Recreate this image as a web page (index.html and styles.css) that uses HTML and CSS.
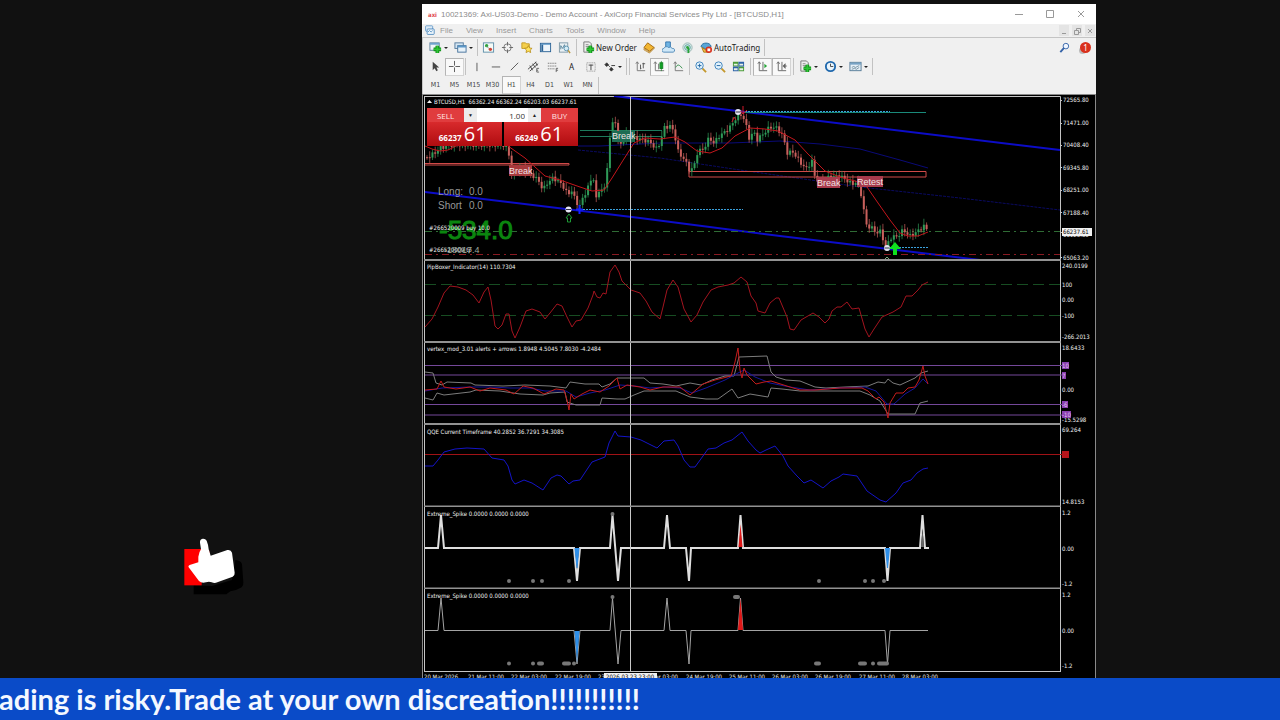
FILE: index.html
```html
<!DOCTYPE html>
<html lang="en">
<head>
    <meta charset="UTF-8">
    <meta name="viewport" content="width=device-width, initial-scale=1.0">
    <title>BTCUSD,H1</title>
    <link rel="stylesheet" href="styles.css">
</head>
<body>
    <svg class="sprite" aria-hidden="true">
        <symbol id="i-mdi" viewBox="0 0 14 14"><rect x="2" y="1" width="9" height="7" rx="1" fill="#dcebf7" stroke="#5b93c4"/><rect x="4" y="5" width="9" height="7" rx="1" fill="#eaf4fb" stroke="#3f7fb8"/><path d="M5 9l2-2 2 2 2-2" stroke="#4a87bd" fill="none"/></symbol>
        <symbol id="i-newchart" viewBox="0 0 14 14"><rect x="1" y="2" width="10" height="8" fill="#eef5fa" stroke="#5d7f9a"/><path d="M1 3h10" stroke="#6ea3cc" stroke-width="2"/><path d="M9 5v8M5 9h8" stroke="#0d8a14" stroke-width="4"/><path d="M9 5v8M5 9h8" stroke="#2fc437" stroke-width="2"/></symbol>
        <symbol id="i-profiles" viewBox="0 0 14 14"><rect x="1" y="2" width="9" height="6" fill="#d4e6f3" stroke="#54799b"/><rect x="4" y="5" width="9" height="7" fill="#e8f2f9" stroke="#45729b"/><path d="M4 6h9" stroke="#5a97c8" stroke-width="2"/></symbol>
        <symbol id="i-market" viewBox="0 0 14 14"><rect x="1.500" y="2" width="11" height="10" fill="#f5fbf7" stroke="#5f8faa"/><circle cx="5" cy="5" r="1.800" fill="#2da33c"/><path d="M5 6l4 3" stroke="#999"/><circle cx="9" cy="9" r="1.800" fill="#cf4436"/></symbol>
        <symbol id="i-target" viewBox="0 0 14 14"><circle cx="7" cy="7" r="4" fill="none" stroke="#777"/><path d="M7 1v4M7 9v4M1 7h4M9 7h4" stroke="#666"/></symbol>
        <symbol id="i-stars" viewBox="0 0 14 14"><path d="M2 2h4l1 1h3v5H2z" fill="#f4cf4b" stroke="#c39a2a"/><path d="M9 5l1.300 2.500 2.700.4-2 1.900.5 2.700L9 11.200 6.500 12.500 7 9.800 5 7.900l2.700-.4z" fill="#ffe25a" stroke="#b28510" stroke-width=".8"/></symbol>
        <symbol id="i-terminal" viewBox="0 0 14 14"><rect x="1.500" y="2.500" width="11" height="9" fill="#eef5fb" stroke="#2c6396"/><path d="M2 3.500h10" stroke="#4a8cc4"/><path d="M3.500 4v7" stroke="#2c6396" stroke-width="2"/></symbol>
        <symbol id="i-tester" viewBox="0 0 14 14"><rect x="1.500" y="2" width="9" height="10" fill="#eaf1f4" stroke="#7f9aa8"/><path d="M3 9V5l2 3 2-4 1 4" stroke="#57859d" fill="none"/><circle cx="9" cy="8" r="2.500" fill="#d5ecf6" stroke="#5b93b0"/><path d="M11 10l2 3" stroke="#b59033" stroke-width="1.500"/></symbol>
        <symbol id="i-order" viewBox="0 0 14 14"><path d="M2 1h6l2 2v9H2z" fill="#eee" stroke="#777"/><path d="M4 4h3M4 6h4" stroke="#888"/><path d="M9 5v8M5 9h8" stroke="#0d8a14" stroke-width="4"/><path d="M9 5v8M5 9h8" stroke="#2fc437" stroke-width="2"/></symbol>
        <symbol id="i-book" viewBox="0 0 14 14"><path d="M5 2l7 5-5 4-6-4z" fill="#f2b632" stroke="#a66b0e"/><path d="M1 8v1.500L7 13l5-5V7L7 12z" fill="#ffe9a8" stroke="#a66b0e" stroke-width=".7"/></symbol>
        <symbol id="i-vps" viewBox="0 0 14 14"><path d="M4 1h5v6H4z" fill="#6fb4e3" stroke="#3475ad"/><path d="M2 12a2 2 0 0 1 0-4 3 3 0 0 1 5-1 3 3 0 0 1 4 1 2 2 0 0 1 1 4z" fill="#cfe8f8" stroke="#5089b8"/></symbol>
        <symbol id="i-signal" viewBox="0 0 14 14"><circle cx="7" cy="7" r="5" fill="#d5e9e6" stroke="#9ab5b3"/><circle cx="7" cy="7" r="3" fill="none" stroke="#59a0a0"/><path d="M8 7v6" stroke="#27a237" stroke-width="2"/><circle cx="7" cy="7" r="1.500" fill="#2da33c"/></symbol>
        <symbol id="i-auto" viewBox="0 0 14 14"><path d="M1 6c1-5 10-5 11 0L7 9z" fill="#58a6d8" stroke="#2c6f9f"/><path d="M2 7l5 3 4-3-1 5H4z" fill="#f0c04a" stroke="#a87a17"/><circle cx="9.500" cy="9.500" r="3.500" fill="#d8311d"/><rect x="8" y="8" width="3" height="3" fill="#fff"/></symbol>
        <symbol id="i-cursor" viewBox="0 0 14 14"><path d="M4 2v9l2-2 2 3 1.500-1L8 8h3z" fill="#444"/></symbol>
        <symbol id="i-cross" viewBox="0 0 14 14"><path d="M7 1v5M7 8v5M1 7h5M8 7h5" stroke="#555"/></symbol>
        <symbol id="i-vline" viewBox="0 0 14 14"><path d="M7.500 3v9" stroke="#555"/></symbol>
        <symbol id="i-hline" viewBox="0 0 14 14"><path d="M3 7.500h9" stroke="#555"/></symbol>
        <symbol id="i-trend" viewBox="0 0 14 14"><path d="M3 11l8-8" stroke="#555"/></symbol>
        <symbol id="i-channel" viewBox="0 0 14 14"><path d="M1 10l9-8M3 12l9-8M3 6l3 5M6 4l3 4M9 2l2 4" stroke="#444"/><path d="M13 9h-2.500v4H13M10.500 11H12" stroke="#444" fill="none" stroke-width=".8"/></symbol>
        <symbol id="i-fibo" viewBox="0 0 14 14"><path d="M2 3.500h10M2 6.500h10M2 9.500h7" stroke="#555" stroke-dasharray="1 1"/><path d="M13 9h-2v4M11 11h2" stroke="#444" fill="none" stroke-width=".8"/></symbol>
        <symbol id="i-label" viewBox="0 0 14 14"><rect x="3" y="3" width="9" height="9" fill="none" stroke="#888" stroke-dasharray="1 1"/><path d="M5 5.500h5M7.500 5v6" stroke="#444"/></symbol>
        <symbol id="i-arrows" viewBox="0 0 14 14"><path d="M2 5l2-2 2 2-2 2zM5 5l3 3M7 10l2-2 2 2-2 2z" fill="#333" stroke="#333" stroke-width=".8"/><path d="M9 6h4" stroke="#333"/></symbol>
        <symbol id="i-bars" viewBox="0 0 14 14"><path d="M3.500 2v9.500H12M2 4l1.500-2L5 4" stroke="#777" fill="none"/><path d="M7 5v5M7 9h1M10 3v6M9 4h3" stroke="#555"/></symbol>
        <symbol id="i-candles" viewBox="0 0 14 14"><path d="M2.500 2v9.500H12M1 4l1.500-2L4 4M6 4v6" stroke="#777" fill="none"/><rect x="7.500" y="3" width="3" height="6" fill="#1fc436" stroke="#0c7d1b"/><path d="M9 1v11" stroke="#0c7d1b" stroke-width=".7"/></symbol>
        <symbol id="i-line" viewBox="0 0 14 14"><path d="M3.500 2v9.500H12M2 4l1.500-2L5 4" stroke="#777" fill="none"/><path d="M4 8c2-4 4-3 7 1" stroke="#2b8b43" fill="none"/></symbol>
        <symbol id="i-zoomin" viewBox="0 0 14 14"><path d="M9 9l4 4" stroke="#c4982c" stroke-width="2"/><circle cx="6" cy="6" r="4" fill="#e0f1fc" stroke="#3a80ba"/><path d="M4 6h4M6 4v4" stroke="#2468a4"/></symbol>
        <symbol id="i-zoomout" viewBox="0 0 14 14"><path d="M9 9l4 4" stroke="#c4982c" stroke-width="2"/><circle cx="6" cy="6" r="4" fill="#e0f1fc" stroke="#3a80ba"/><path d="M4 6h4" stroke="#2468a4"/></symbol>
        <symbol id="i-tile" viewBox="0 0 14 14"><path d="M1 2h6v5H1zM7 7h6v5H7z" fill="#4b9b38"/><path d="M7 2h6v5H7zM1 7h6v5H1z" fill="#2d62a8"/><path d="M2 5h4M8 5h4M2 10h4M8 10h4" stroke="#e8f2e6" stroke-width="2"/></symbol>
        <symbol id="i-scroll" viewBox="0 0 14 14"><path d="M3.500 2v9.500H12M2 4l1.500-2L5 4M7.500 2v9" stroke="#666" fill="none"/><path d="M9 4l3 2.500L9 9z" fill="#24a637"/></symbol>
        <symbol id="i-shift" viewBox="0 0 14 14"><path d="M3.500 2v9.500H12M2 4l1.500-2L5 4M7.500 2v9" stroke="#666" fill="none"/><path d="M11 4L8.500 6.500 11 9zM10 6.500h3" fill="#666" stroke="#666" stroke-width=".8"/></symbol>
        <symbol id="i-clock" viewBox="0 0 14 14"><circle cx="7" cy="7" r="5" fill="#eaf4fb" stroke="#1f68ad" stroke-width="2"/><path d="M7 4v3h3" stroke="#444" fill="none"/></symbol>
        <symbol id="i-template" viewBox="0 0 14 14"><rect x="1" y="2.500" width="12" height="9" fill="#e5eff6" stroke="#567b98"/><path d="M1 4h12" stroke="#78a3c4" stroke-width="2"/><path d="M3 8l2-1 2 1 4-2M3 10l3-1 2 1 3-2" stroke="#5b7b8c" fill="none" stroke-width=".8"/></symbol>
        <symbol id="i-search" viewBox="0 0 14 14"><circle cx="8.500" cy="5.500" r="3" fill="#eef5ff" stroke="#3563a8"/><path d="M6.500 7.500L2.500 12" stroke="#3563a8" stroke-width="2"/></symbol>
    </svg>

    <main class="stage">
        <aside class="side">
            <svg class="thumb" viewBox="546 12 192 192" role="img" aria-label="Like">
                <path d="M584 166v27h98l12-9q20-3 34-12 6-4 5-15l-4-54q-3-12-20-13l-10 60-60 18z" fill="#000"/>
                <rect x="556" y="57" width="52" height="109" fill="#f00"/>
                <path d="M608 60h22l3 18h-25z" fill="#f00"/>
                <path d="M603 38q-1-10 8-12 8-1 12 6 5 12 6 26l6 19 50-17q11-2 14 8l8 60q1 8-6 12l-46 17q-8 4-17 0-8-4-17 0-13 4-21-4l-31-41q-3-5 3-7l26-8V80q2-14 8-22z" fill="#fff"/>
            </svg>
        </aside>

        <section class="terminal">
            <header class="titlebar">
                <span class="brand">axi</span>
                <span class="window-title">10021369: Axi-US03-Demo - Demo Account - AxiCorp Financial Services Pty Ltd - [BTCUSD,H1]</span>
                <div class="window-buttons">
                    <button type="button" aria-label="Minimize"><svg viewBox="0 0 10 10"><path d="M1 5.500h8"/></svg></button>
                    <button type="button" aria-label="Maximize"><svg viewBox="0 0 10 10"><path d="M1.500 1.500h7v7h-7z"/></svg></button>
                    <button type="button" aria-label="Close"><svg viewBox="0 0 10 10"><path d="M2 2l6 6M8 2l-6 6"/></svg></button>
                </div>
            </header>

            <nav class="menubar">
                <svg class="mdi"><use href="#i-mdi"/></svg>
                <button type="button">File</button>
                <button type="button">View</button>
                <button type="button">Insert</button>
                <button type="button">Charts</button>
                <button type="button">Tools</button>
                <button type="button">Window</button>
                <button type="button">Help</button>
                <div class="mdi-buttons">
                    <button type="button" aria-label="Minimize chart"><svg viewBox="0 0 10 10"><path d="M3 7.500h4"/></svg></button>
                    <button type="button" aria-label="Restore chart"><svg viewBox="0 0 10 10"><path d="M2.500 4.500h4v4h-4zM4.500 4V2.500h4v4H7"/></svg></button>
                    <button type="button" aria-label="Close chart"><svg viewBox="0 0 10 10"><path d="M3 3l4 4M7 3L3 7"/></svg></button>
                </div>
            </nav>

            <div class="toolbar">
                <button type="button" class="tool drop" aria-label="New chart"><svg><use href="#i-newchart"/></svg></button>
                <button type="button" class="tool drop" aria-label="Profiles"><svg><use href="#i-profiles"/></svg></button>
                <i class="sep tight"></i>
                <button type="button" class="tool" aria-label="Market watch"><svg><use href="#i-market"/></svg></button>
                <button type="button" class="tool" aria-label="Data window"><svg><use href="#i-target"/></svg></button>
                <button type="button" class="tool" aria-label="Navigator"><svg><use href="#i-stars"/></svg></button>
                <button type="button" class="tool" aria-label="Terminal"><svg><use href="#i-terminal"/></svg></button>
                <button type="button" class="tool" aria-label="Strategy tester"><svg><use href="#i-tester"/></svg></button>
                <i class="sep"></i>
                <button type="button" class="tool wide"><svg><use href="#i-order"/></svg>New Order</button>
                <button type="button" class="tool" aria-label="MetaEditor"><svg><use href="#i-book"/></svg></button>
                <button type="button" class="tool" aria-label="Hosting"><svg><use href="#i-vps"/></svg></button>
                <button type="button" class="tool" aria-label="Signals"><svg><use href="#i-signal"/></svg></button>
                <button type="button" class="tool wide"><svg><use href="#i-auto"/></svg>AutoTrading</button>
                <i class="sep tight"></i>
                <div class="toolbar-end">
                    <button type="button" class="tool" aria-label="Search"><svg><use href="#i-search"/></svg></button>
                    <button type="button" class="tool alert" aria-label="Notifications"><span class="badge">1</span></button>
                </div>
            </div>

            <div class="toolbar">
                <button type="button" class="tool" aria-label="Cursor"><svg><use href="#i-cursor"/></svg></button>
                <button type="button" class="tool pressed" aria-label="Crosshair"><svg><use href="#i-cross"/></svg></button>
                <i class="sep tight"></i>
                <button type="button" class="tool" aria-label="Vertical line"><svg><use href="#i-vline"/></svg></button>
                <button type="button" class="tool" aria-label="Horizontal line"><svg><use href="#i-hline"/></svg></button>
                <button type="button" class="tool" aria-label="Trendline"><svg><use href="#i-trend"/></svg></button>
                <button type="button" class="tool" aria-label="Channel"><svg><use href="#i-channel"/></svg></button>
                <button type="button" class="tool" aria-label="Fibonacci"><svg><use href="#i-fibo"/></svg></button>
                <button type="button" class="tool">A</button>
                <button type="button" class="tool" aria-label="Text label"><svg><use href="#i-label"/></svg></button>
                <button type="button" class="tool drop" aria-label="Arrows"><svg><use href="#i-arrows"/></svg></button>
                <i class="sep double"></i>
                <button type="button" class="tool" aria-label="Bar chart"><svg><use href="#i-bars"/></svg></button>
                <button type="button" class="tool pressed" aria-label="Candlesticks"><svg><use href="#i-candles"/></svg></button>
                <button type="button" class="tool" aria-label="Line chart"><svg><use href="#i-line"/></svg></button>
                <i class="sep tight"></i>
                <button type="button" class="tool" aria-label="Zoom in"><svg><use href="#i-zoomin"/></svg></button>
                <button type="button" class="tool" aria-label="Zoom out"><svg><use href="#i-zoomout"/></svg></button>
                <button type="button" class="tool" aria-label="Tile windows"><svg><use href="#i-tile"/></svg></button>
                <i class="sep"></i>
                <button type="button" class="tool pressed" aria-label="Auto scroll"><svg><use href="#i-scroll"/></svg></button>
                <button type="button" class="tool pressed" aria-label="Chart shift"><svg><use href="#i-shift"/></svg></button>
                <i class="sep"></i>
                <button type="button" class="tool drop" aria-label="Indicators"><svg><use href="#i-order"/></svg></button>
                <button type="button" class="tool drop" aria-label="Periods"><svg><use href="#i-clock"/></svg></button>
                <button type="button" class="tool drop" aria-label="Templates"><svg><use href="#i-template"/></svg></button>
                <i class="sep tight"></i>
            </div>

            <div class="toolbar periods">
                <button type="button" class="tool">M1</button>
                <button type="button" class="tool">M5</button>
                <button type="button" class="tool">M15</button>
                <button type="button" class="tool">M30</button>
                <button type="button" class="tool pressed">H1</button>
                <button type="button" class="tool">H4</button>
                <button type="button" class="tool">D1</button>
                <button type="button" class="tool">W1</button>
                <button type="button" class="tool">MN</button>
                <i class="sep tight"></i>
            </div>

            <div class="chart">
                <form class="one-click">
                    <div class="one-click-top">
                        <button type="button" class="side-btn">SELL</button>
                        <button type="button" class="step" aria-label="Decrease volume">▼</button>
                        <input type="text" value="1.00" aria-label="Volume">
                        <button type="button" class="step" aria-label="Increase volume">▲</button>
                        <button type="button" class="side-btn">BUY</button>
                    </div>
                    <div class="one-click-prices">
                        <button type="button"><small>66237</small> 61</button>
                        <button type="button"><small>66249</small> 61</button>
                    </div>
                </form>

                <!-- price -->
                <svg class="panel" viewBox="424 96 671 165">
                    <path class="frame" d="M424 96.500h636.500V261M424.500 96v165"/>
                    <path class="trend" d="M614 96L1060 150M425 192L640 218L780 236L980 260"/>
                    <path class="ma-blue" d="M578 146L600 146L660 143L730 143L780 141L820 144L860 149L900 160L928 168"/>
                    <path class="ma-blue dotted" d="M578 150L660 158L740 170L860 187L960 198L1060 210"/>
                    <path d="M580 130.500H662M580 136.500H662" stroke="#1d7a5c"/>
                    <path d="M745 112.500H926" stroke="#1a8a7a"/>
                    <path d="M745 111.500H890M580 209.500H743M887 247.500H929" stroke="#3aa0dc" stroke-dasharray="2 1"/>
                    <path d="M425 163.500H569V165H425M689 171.500H926V177H689z" fill="none" stroke="#d04a48"/>
                    <path d="M425 231.500H1060" stroke="#2f6b35" stroke-dasharray="7 4 2 4"/>
                    <path d="M425 254.500H1060" stroke="#8a1a22" stroke-dasharray="7 4 2 4"/>
                    <g id="candles"></g>
                    <path class="ma-red" d="M425 146L432 149L440 151L448 150L456 146M508 146L525 158L545 176L560 180L580 187L592 191L604 190L612 178L622 162L634 143L645 138L660 139L675 137L685 142L697 151L710 153L722 148L735 136L750 128L765 129L778 131L795 140L808 154L825 171L840 177L855 181L867 187L878 203L890 220L900 233L908 236L918 236L928 232"/>
                    <g class="tags">
                        <rect x="509" y="165" width="23" height="11" fill="#a83a3c"/><text x="509" y="174">Break</text>
                        <rect x="612" y="131" width="23" height="11" fill="#1d6b52"/><text x="612" y="139">Break</text>
                        <rect x="817" y="177" width="23" height="11" fill="#a83a4c"/><text x="817" y="186">Break</text>
                        <rect x="857" y="176" width="26" height="11" fill="#a83a4c"/><text x="857" y="185">Retest</text>
                    </g>
                    <g fill="#e6e6f4"><circle cx="568.500" cy="209.500" r="3"/><circle cx="738" cy="112" r="3"/><circle cx="887" cy="248" r="3"/></g>
                    <path d="M566 209.500h5M735.500 112h5M884.500 248h5" stroke="#334"/>
                    <path d="M579.500 205v9M576 209.500h7" stroke="#1420ff" stroke-width="2"/>
                    <path d="M569 214l3 4h-1.500v4h-3v-4H566z" fill="none" stroke="#1d9a35"/>
                    <path d="M884 260l3-3 3 3" fill="none" stroke="#7aa87f"/>
                    <path d="M895 242l6 7h-4v6h-4v-6h-4z" fill="#0fe01f"/>
                    <path d="M743 106v8M740.500 111l2.500 3 4-4M732 122l2-5 2 3" fill="none" stroke="#d3182a"/>
                    <g class="net"><text x="438" y="195">Long:</text><text x="469" y="195">0.0</text><text x="438" y="209">Short</text><text x="469" y="209">0.0</text></g>
                    <text class="profit" x="439" y="239">-534.0</text>
                    <g class="txt">
                        <path d="M427 103l2.500-3 2.500 3z"/>
                        <text x="434" y="104">BTCUSD,H1&nbsp; 66362.24 66362.24 66203.03 66237.61</text>
                        <text x="429" y="230">#266520009 buy 10.0</text>
                        <text x="429" y="252">#266520009 tp</text>
                    </g>
                    <text class="points" x="444" y="253">-18017.4</text>
                    <g class="txt">
                        <text x="1063" y="102">72565.80</text><text x="1063" y="125">71471.00</text><text x="1063" y="147">70408.40</text><text x="1063" y="170">69345.80</text>
                        <text x="1063" y="192">68251.00</text><text x="1063" y="215">67188.40</text><text x="1063" y="237">66125.80</text><text x="1063" y="260">65063.20</text>
                        <rect x="1062" y="228" width="30" height="8"/><text class="dark" x="1063" y="234">66237.61</text>
                    </g>
                    <path class="ticks" d="M1060 100.500h2M1060 123.500h2M1060 145.500h2M1060 167.500h2M1060 190.500h2M1060 212.500h2M1060 232.500h2M1060 257.500h2"/>
                    <path class="cross" d="M630.500 97V261"/>
                    <path class="split" d="M424 260h636.500"/>
                </svg>

                <!-- PipBoxer -->
                <svg class="panel" viewBox="424 261 671 82">
                    <path class="frame" d="M424.500 261v82M1060.500 261v82"/>
                    <path d="M425 284.500H1060M425 315.500H1060" stroke="#174d22" stroke-dasharray="11 5"/>
                    <polyline class="osc" points="425,327 432,319 438,307 444,293 450,286 458,287 466,290 473,295 479,303 484,292 488,287 491,300 495,326 498,329 502,325 506,314 509,314 512,331 515,338 520,327 526,311 532,309 540,312 545,319 550,313 557,304 562,306 567,317 572,327 576,321 581,320 588,308 593,295 594,291 597,297 600,298 603,293 606,294 610,272 615,265 619,272 622,281 631,290 640,293 646,301 652,312 660,319 663,307 667,290 673,280 678,287 684,309 691,322 697,315 703,302 711,290 718,287 728,285 734,283 741,277 747,282 751,296 756,303 758,311 765,313 770,303 776,298 779,298 787,317 790,329 794,330 801,320 813,313 819,317 825,323 829,319 832,311 837,307 841,307 847,302 852,309 859,308 865,329 869,337 874,329 882,317 893,312 901,307 906,296 912,296 918,290 922,285 928,282"/>
                    <g class="txt">
                        <text x="427" y="269">PipBoxer_Indicator(14) 110.7304</text>
                        <text x="1062" y="268">240.0199</text><text x="1062" y="287">100</text><text x="1062" y="302">0.00</text><text x="1062" y="318">-100</text><text x="1062" y="339">-266.2013</text>
                    </g>
                    <path class="cross" d="M630.500 261v82"/>
                    <path class="split" d="M424 342h636.500"/>
                </svg>

                <!-- vertex -->
                <svg class="panel" viewBox="424 343 671 82">
                    <path class="frame" d="M424.500 343v82M1060.500 343v82"/>
                    <path d="M425 365.500H1062M425 375H1062M425 404.500H1062M425 415H1062" stroke="#74489a"/>
                    <polyline class="band" points="425,372 433,373 436,383 442,385 447,382 471,383 475,385 503,386 525,385 550,386 566,388 570,382 585,384 599,384 602,387 610,384 617,378 644,378 650,383 663,384 676,386 690,383 701,385 712,380 725,376 734,376 739,357 767,356 771,372 776,377 786,380 800,381 815,387 826,388 845,387 868,386 878,382 885,383 888,379 893,383 900,385 915,378 921,373 928,371"/>
                    <polyline class="band" points="425,398 433,400 437,393 444,395 470,392 476,390 500,391 520,394 543,395 550,393 565,392 567,402 576,405 600,405 602,398 617,399 625,399 634,395 644,391 676,391 690,397 706,399 718,399 732,389 738,398 750,394 768,397 771,388 782,389 800,391 830,391 860,391 870,395 880,401 888,414 915,414 920,403 928,401"/>
                    <polyline class="signal" points="425,391 442,388 470,387 490,387 510,388 530,388 545,391 556,391 566,391 576,397 590,393 605,390 620,385 635,386 650,388 665,387 680,388 692,393 706,388 725,380 738,373 744,370 755,377 770,383 790,387 810,390 840,388 865,387 876,391 887,404 894,404 905,394 915,388 923,379 928,384"/>
                    <polyline class="vertex" points="425,390 437,389 441,381 444,387 456,389 470,387 480,391 490,388 506,390 514,394 523,386 533,388 544,394 556,389 564,390 567,400 569,410 571,394 574,399 582,394 590,390 600,392 609,386 617,378 620,389 627,385 640,387 650,390 663,387 680,387 690,395 703,384 715,380 731,376 735,362 738,348 740,370 742,378 744,368 747,375 750,378 756,384 764,382 771,381 790,387 800,390 815,390 840,388 862,388 868,391 876,399 879,397 884,402 888,418 890,403 896,393 903,393 908,388 915,387 919,380 923,366 925,376 928,384"/>
                    <g class="txt">
                        <text x="427" y="351">vertex_mod_3.01 alerts + arrows 1.8948 4.5045 7.8030 -4.2484</text>
                        <text x="1062" y="350">18.6433</text><text x="1062" y="392">0.00</text><text x="1062" y="422">-15.5298</text>
                    </g>
                    <g class="levels">
                        <rect x="1062" y="362" width="7" height="7"/><rect x="1062" y="372" width="4" height="7"/><rect x="1062" y="401" width="6" height="7"/><rect x="1062" y="411" width="9" height="7"/>
                        <text x="1062" y="368">10</text><text x="1062" y="378">7</text><text x="1062" y="407">-6</text><text x="1062" y="417">-10</text>
                    </g>
                    <path class="cross" d="M630.500 343v82"/>
                    <path class="split" d="M424 424h636.500"/>
                </svg>

                <!-- QQE -->
                <svg class="panel" viewBox="424 425 671 82">
                    <path class="frame" d="M424.500 425v82M1060.500 425v82"/>
                    <path d="M425 454.500H1062" stroke="#a01216"/>
                    <rect x="1062" y="451" width="7" height="7" fill="#b5141a"/>
                    <polyline class="qqe" points="425,466 433,466 438,460 444,452 455,449 467,448 484,449 492,458 504,460 508,466 512,480 515,484 524,480 532,483 543,490 551,478 557,475 561,476 569,484 573,481 580,480 586,471 592,462 605,457 609,443 615,431 618,436 631,437 641,440 657,448 664,441 674,440 678,446 684,460 690,467 695,467 703,456 708,449 716,448 724,443 732,440 742,432 748,441 756,450 760,453 766,450 775,446 783,456 788,466 797,476 804,483 811,480 823,488 831,481 839,477 843,474 857,476 867,491 880,500 886,502 896,493 903,483 911,480 917,473 923,469 928,468"/>
                    <g class="txt">
                        <text x="427" y="434">QQE Current Timeframe 40.2852 36.7291 34.3085</text>
                        <text x="1062" y="432">69.264</text><text x="1062" y="504">14.8153</text>
                    </g>
                    <path class="cross" d="M630.500 425v82"/>
                    <path class="split" d="M424 506.500h636.500"/>
                </svg>

                <!-- Extreme_Spike, thick -->
                <svg class="panel" viewBox="424 507 671 82">
                    <path class="frame" d="M424.500 507v82M1060.500 507v82"/>
                    <path class="spike thick" d="M425 548H438L441 515L444 548H574L577 581L580 548H610L612.500 515L618 581L621 548H664L667 515L670 548H686L689 581L691 548H738L740.500 515L743 548H885L887.500 581L890 548H920L922.500 515L925 548H929"/>
                    <path d="M738.500 547l2-23 2 23z" fill="#e01818"/>
                    <path d="M574.500 548h5l-2 20h-1zM885 548h5l-2 20h-1z" fill="#2f8fe8"/>
                    <path d="M921 547l1.500-18 1.500 18z" fill="#666"/>
                    <path class="dots" d="M509 581h0M533 581h0M542 581h0M569 581h0M819 581h0M865 581h0M873 581h0M884 581h0M612.500 514h0"/>
                    <g class="txt">
                        <text x="427" y="516">Extreme_Spike 0.0000 0.0000 0.0000</text>
                        <text x="1062" y="515">1.2</text><text x="1062" y="551">0.00</text><text x="1062" y="586">-1.2</text>
                    </g>
                    <path class="cross" d="M630.500 507v82"/>
                    <path class="split" d="M424 588.500h636.500"/>
                </svg>

                <!-- Extreme_Spike, thin -->
                <svg class="panel" viewBox="424 589 671 83">
                    <path class="frame" d="M424.500 589v83M1060.500 589v83M424 671.500h636.500"/>
                    <path class="spike" d="M425 630.500H438L441 598L444 630.500H574L577 664L580 630.500H610L612.500 598L618 664L621 630.500H664L667 598L670 630.500H686L689 664L691 630.500H738L740.500 598L743 630.500H885L887.500 664L890 630.500H928"/>
                    <path d="M738 630l2.500-32 2.500 32z" fill="#e01818"/>
                    <path d="M574.500 631h5l-2.500 32z" fill="#2f8fe8"/>
                    <path class="dots" d="M509 663.500h0M533 663.500h0M539 663.500h3M564 663.500h5M574 663.500h0M816 663.500h3M860 663.500h5M873 663.500h0M879 663.500h8M612.500 597h0M735 597h3"/>
                    <g class="txt">
                        <text x="427" y="598">Extreme_Spike 0.0000 0.0000 0.0000</text>
                        <text x="1062" y="597">1.2</text><text x="1062" y="633">0.00</text><text x="1062" y="668">-1.2</text>
                    </g>
                    <path class="cross" d="M630.500 589v83"/>
                </svg>

                <!-- time scale -->
                <svg class="panel" viewBox="424 672 671 12">
                    <g class="txt">
                        <text x="424" y="679">20 Mar 2026</text><text x="468" y="679">21 Mar 11:00</text><text x="511" y="679">22 Mar 03:00</text><text x="555" y="679">22 Mar 19:00</text><text x="598" y="679">23 Mar 11:00</text><text x="642" y="679">24 Mar 03:00</text><text x="686" y="679">24 Mar 19:00</text><text x="729" y="679">25 Mar 11:00</text><text x="772" y="679">26 Mar 03:00</text><text x="815" y="679">26 Mar 19:00</text><text x="859" y="679">27 Mar 11:00</text><text x="902" y="679">28 Mar 03:00</text>
                        <rect x="604" y="673" width="53" height="8"/><text class="dark" x="606" y="679">2026.03.23 23:00</text>
                    </g>
                </svg>
            </div>
        </section>
    </main>

    <footer class="ticker">
        <p>Trading is risky.Trade at your own discreation!!!!!!!!!!!</p>
    </footer>

    <script src="script.js"></script>
</body>
</html>
```

FILE: styles.css
```css
* {
    box-sizing: border-box;
}

body {
    margin: 0;
    height: 100vh;
    display: flex;
    flex-direction: column;
    background: #111;
    font-family: "Liberation Sans", Arial, sans-serif;
    overflow: hidden;
}

button {
    margin: 0;
    padding: 0;
    border: none;
    background: none;
    font: inherit;
    color: inherit;
    cursor: pointer;
}

.sprite {
    display: none;
}

.stage {
    flex: 1;
    min-height: 0;
    display: grid;
    grid-template-columns: 422fr 674fr 184fr;
    grid-template-rows: 100%;
    overflow: hidden;
}

.side {
    display: flex;
    align-items: flex-end;
    padding: 0 0 80px 43%;
}

.thumb {
    width: 64px;
    height: 64px;
}

/* terminal window */
.terminal {
    margin-top: 4px;
    min-width: 0;
    background: #f0f0f0;
    color: #222;
}

.titlebar {
    display: flex;
    align-items: center;
    height: 20px;
    padding-left: 6px;
    background: #fff;
    font-size: 8px;
    color: #8c8c8c;
    white-space: nowrap;
}

.brand {
    width: 13px;
    font-family: "DejaVu Sans Condensed", "DejaVu Sans", sans-serif;
    font-size: 6px;
    font-weight: bold;
    color: #e0454c;
}

.window-buttons {
    display: flex;
    margin-left: auto;
}

.window-buttons button {
    width: 31px;
    height: 20px;
}

.window-buttons svg,
.mdi-buttons svg {
    display: block;
    width: 10px;
    height: 10px;
    margin: auto;
    fill: none;
    stroke: #999;
}

.menubar {
    display: flex;
    align-items: center;
    gap: 13px;
    height: 14px;
    padding-left: 2px;
    border-bottom: 1px solid #c4c4c4;
    font-size: 8px;
    color: #999;
}

.mdi {
    width: 11px;
    height: 11px;
    margin-right: -8px;
}

.mdi-buttons {
    display: flex;
    gap: 3px;
    margin-left: auto;
    padding-right: 1px;
}

.mdi-buttons button {
    width: 10px;
    height: 11px;
    background: #e4e4e4;
}

.toolbar {
    display: flex;
    align-items: center;
    height: 19px;
    padding-left: 3px;
    border-left: 1px solid #c8c8c8;
    font-family: "Noto Sans", sans-serif;
    font-size: 8px;
    white-space: nowrap;
}

.tool {
    display: flex;
    align-items: center;
    justify-content: center;
    width: 19px;
    height: 18px;
}

.tool svg {
    flex: none;
    width: 13px;
    height: 13px;
}

.drop {
    width: 25px;
    gap: 2px;
}

.drop::after {
    content: "";
    border: 2px solid transparent;
    border-top-color: #222;
    border-bottom: none;
}

.wide {
    width: auto;
    gap: 1px;
    padding: 0 3px;
}

.pressed {
    background: #f9f9f9;
    border: 1px solid #d4d4d4;
    border-top-color: #b4b4b4;
    border-left-color: #b4b4b4;
}

.sep {
    width: 1px;
    height: 17px;
    margin: 0 2px;
    background: #c2c2c2;
}

.sep.tight {
    margin: 0 1px;
}

.sep.double {
    width: 4px;
    margin: 0 1px;
    border: 1px solid #c2c2c2;
    border-width: 0 1px;
    background: none;
}

.toolbar-end {
    display: flex;
    gap: 2px;
    margin-left: auto;
    padding-right: 1px;
}

.badge {
    width: 11px;
    height: 11px;
    border-radius: 50%;
    background: #d9301c;
    color: #fff;
    font-size: 8px;
    line-height: 11px;
    box-shadow: -3px 3px 0 -2px #bbb;
}

.periods {
    height: 18px;
    font-family: "DejaVu Sans Condensed", "DejaVu Sans", sans-serif;
    font-size: 7px;
    color: #444;
}

/* chart area */
.chart {
    position: relative;
    padding: 1px 0 0 1px;
    border: 1px solid #8a8a8a;
    border-width: 1px 1px 0 1px;
    background: #000;
}

.panel {
    display: block;
    width: 100%;
    height: auto;
}

.frame,
.ticks {
    fill: none;
    stroke: #c4c4c4;
}

.split {
    stroke: #929292;
    stroke-width: 2;
}

.cross {
    stroke: #c8c8c8;
}

.trend {
    fill: none;
    stroke: #0c0cc8;
    stroke-width: 2;
}

.ma-blue {
    fill: none;
    stroke: #0a0a78;
}

.ma-blue.dotted {
    stroke: #0a0a60;
    stroke-dasharray: 3 1;
}

.ma-red {
    fill: none;
    stroke: #c4161c;
}

.bull {
    stroke: #2f9a58;
    fill: #2f9a58;
}

.bear {
    stroke: #c8605c;
    fill: #c8605c;
}

.osc {
    fill: none;
    stroke: #a3141f;
}

.band {
    fill: none;
    stroke: #7c7c7c;
}

.signal {
    fill: none;
    stroke: #14149c;
}

.vertex {
    fill: none;
    stroke: #c41c1c;
}

.qqe {
    fill: none;
    stroke: #1414c8;
    stroke-linejoin: round;
}

.spike {
    fill: none;
    stroke: #a4a4a4;
}

.spike.thick {
    stroke: #dedede;
    stroke-width: 2;
}

.dots {
    stroke: #777;
    stroke-width: 4;
    stroke-linecap: round;
}

.txt {
    font-family: "DejaVu Sans Condensed", "DejaVu Sans", sans-serif;
    font-size: 6px;
    fill: #f0f0f0;
}

.txt .dark {
    fill: #000;
}

.levels {
    font-family: "DejaVu Sans Condensed", "DejaVu Sans", sans-serif;
    font-size: 6px;
    fill: #8a3fb0;
}

.levels text {
    fill: #e4c8f0;
}

.tags {
    font-size: 9px;
    fill: #f0e4e4;
}

.net {
    font-size: 10px;
    fill: #989898;
}

.profit {
    font-size: 26px;
    fill: #0b860f;
    stroke: #0b860f;
}

.points {
    font-size: 9px;
    fill: #9aa89a;
}

/* one-click trading, floats over the price panel */
.one-click {
    position: absolute;
    top: 13px;
    left: 4px;
    width: 151px;
    margin: 0;
    background: #000;
    color: #fff;
    font-family: "Open Sans", sans-serif;
}

.one-click-top {
    display: flex;
    height: 14px;
    font-size: 8px;
}

.one-click-top .side-btn {
    flex: 1;
    background: #e03c3e;
    color: #ffe4e4;
}

.one-click-top .step {
    width: 13px;
    background: #ececec;
    color: #222;
    font-size: 5px;
}

.one-click-top input {
    width: 51px;
    min-width: 0;
    padding: 0 3px;
    border: none;
    background: #fff;
    color: #333;
    font: inherit;
    text-align: right;
}

.one-click-prices {
    display: flex;
    gap: 2px;
}

.one-click-prices button {
    flex: 1;
    height: 24px;
    padding-right: 3px;
    background: linear-gradient(#d82a2c, #b00c10);
    font-size: 20px;
    line-height: 24px;
    white-space: nowrap;
}

.one-click-prices small {
    margin-right: -3px;
    font-size: 8px;
    font-weight: bold;
}

/* scrolling notice */
.ticker {
    flex: none;
    height: 42px;
    background: #0a4bc8;
    color: #f4f8ff;
    overflow: hidden;
}

.ticker p {
    display: flex;
    justify-content: flex-end;
    width: 50%;
    margin: 0;
    font-family: Lato, sans-serif;
    font-size: 29px;
    font-weight: bold;
    line-height: 42px;
    white-space: nowrap;
}
```

FILE: script.js
```js
// price track of the BTCUSD panel: [x, y]
const track = [
    [425, 158], [430, 156], [436, 152], [440, 148], [450, 145], [505, 145], [508, 150],
    [512, 176], [520, 168], [530, 174], [535, 177], [540, 183], [543, 190], [548, 182],
    [553, 178], [558, 181], [563, 186], [568, 195], [572, 190], [576, 203], [580, 205],
    [585, 194], [590, 182], [594, 178], [596, 200], [600, 188], [606, 190], [608, 150],
    [612, 125], [615, 118], [619, 150], [622, 140], [626, 135], [631, 137], [640, 139],
    [650, 142], [656, 149], [661, 142], [663, 128], [670, 126], [674, 132], [679, 155],
    [684, 158], [689, 170], [694, 167], [698, 150], [703, 150], [709, 138], [714, 143],
    [720, 135], [725, 132], [731, 126], [736, 118], [742, 114], [746, 125], [749, 138],
    [754, 132], [757, 140], [764, 133], [770, 127], [777, 128], [783, 136], [787, 153],
    [793, 152], [800, 162], [806, 169], [812, 161], [815, 178], [820, 182], [826, 178],
    [832, 177], [840, 176], [846, 180], [852, 184], [858, 182], [862, 198], [866, 225],
    [872, 228], [876, 233], [880, 231], [886, 247], [892, 236], [897, 237], [903, 230],
    [910, 236], [918, 231], [924, 226], [928, 231]
];

function priceAt(x) {
    for (let i = 1; i < track.length; i++) {
        const [x0, y0] = track[i - 1];
        const [x1, y1] = track[i];
        if (x <= x1) {
            return y0 + (y1 - y0) * (x - x0) / (x1 - x0);
        }
    }
    return track[track.length - 1][1];
}

function drawCandles() {
    let html = '';
    let open = priceAt(427);
    let n = 0;

    for (let x = 427; x < 929; x += 2.73) {
        const close = priceAt(x) + Math.sin(n * 2.3) * 2;
        const top = Math.min(open, close);
        const height = Math.max(1, Math.abs(close - open));
        const wick = 2 + Math.abs(Math.sin(n * 1.7)) * 4;
        const type = close < open ? 'bull' : 'bear';
        html += `<path class="${type}" stroke-width="0.7" d="M${x} ${top - wick}V${top + height + wick * 0.8}"/>`;
        html += `<rect class="${type}" stroke-width="0" x="${x - 1}" y="${top}" width="2" height="${height}"/>`;
        open = close;
        n++;
    }

    document.getElementById('candles').innerHTML = html;
}

drawCandles();
```
